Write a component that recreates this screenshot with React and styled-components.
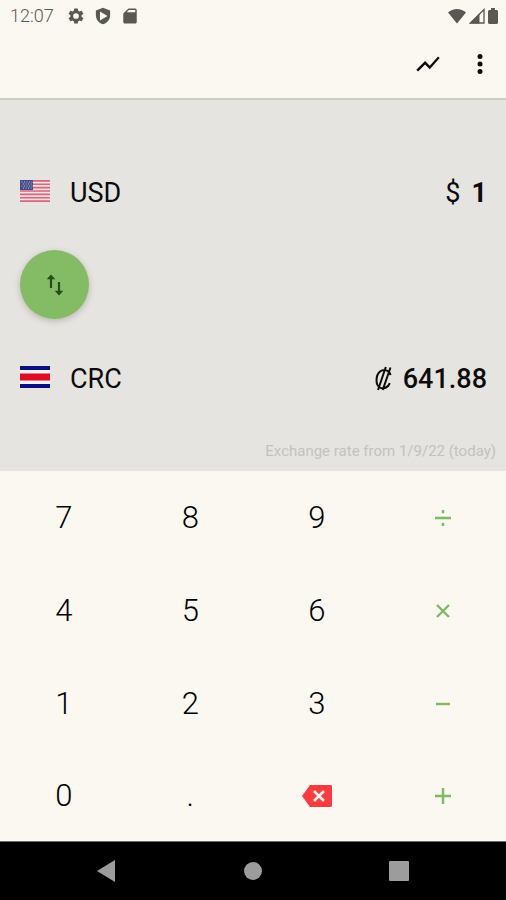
import React from "react";
import styled, { createGlobalStyle } from "styled-components";

const GlobalStyle = createGlobalStyle`
  *, *::before, *::after { box-sizing: border-box; }
  body {
    margin: 0;
    background: #fbf8f1;
    color: #0c0c0c;
    font-family: Roboto, "Liberation Sans", sans-serif;
  }
  button { font: inherit; color: inherit; border: 0; padding: 0; background: none; cursor: pointer; }
  svg { display: block; }
`;

const Screen = styled.div`
  display: flex;
  flex-direction: column;
  min-height: 100vh;
`;

const StatusBar = styled.div`
  display: flex;
  align-items: center;
  height: 32px;
  padding: 0 8px 0 10px;
  color: #595855;
`;

const Clock = styled.time`
  margin-right: 13px;
  font-size: 18px;
  line-height: 24px;
  font-weight: 300;
`;

const StatusIcons = styled.div`
  display: flex;
  align-items: center;
  gap: ${(p) => p.$gap}px;
  margin-left: ${(p) => (p.$end ? "auto" : 0)};
`;

const AppBar = styled.header`
  display: flex;
  align-items: center;
  justify-content: flex-end;
  gap: 22px;
  height: 68px;
  padding: 0 11px 2px 0;
  border-bottom: 2px solid #cdccc8;
`;

const IconButton = styled.button`
  display: grid;
  place-items: center;
  width: 30px;
  height: 48px;
`;

const Converter = styled.main`
  display: flex;
  flex: 1 1 0;
  flex-direction: column;
  background: #e6e4e0;
`;

const Currencies = styled.div`
  padding-top: 46px;
`;

const Row = styled.div`
  display: flex;
  align-items: center;
  height: 93px;
  padding: 0 19px 0 20px;
  font-size: 27px;
  line-height: 32px;
`;

const SwapRow = styled(Row)`
  padding-bottom: 2px;
`;

const CurrencyButton = styled.button`
  display: flex;
  align-items: center;
  gap: 20px;
`;

const Flag = styled.svg`
  width: 30px;
  height: 22px;
  margin-bottom: 3px;
`;

const Amount = styled.output`
  display: flex;
  gap: 11px;
  margin-left: auto;
`;

const Value = styled.span`
  font-weight: ${(p) => (p.$result ? 500 : 700)};
`;

const SwapButton = styled.button`
  display: grid;
  place-items: center;
  width: 69px;
  height: 69px;
  border-radius: 50%;
  background: #84bc66;
  color: #2a4a1d;
  box-shadow: 0 2px 6px rgba(60, 50, 40, 0.26);
`;

const RateNote = styled.p`
  margin: auto 10px 10px;
  text-align: right;
  font-size: 15px;
  line-height: 20px;
  color: #c3c2bf;
`;

const Keypad = styled.section`
  display: grid;
  flex: 1 1 0;
  grid-template-columns: repeat(4, 1fr);
  grid-template-rows: repeat(4, 1fr);
`;

const Key = styled.button`
  display: grid;
  place-items: center;
  min-height: 56px;
  padding: 3px 0 0 1px;
  font-size: 31px;
  line-height: 36px;
  font-weight: 300;
  color: ${(p) => (p.$operator ? "#7dba62" : "#000")};
`;

const NavBar = styled.nav`
  display: flex;
  justify-content: space-between;
  align-items: center;
  height: 59px;
  padding: 0 83px 0 82px;
  border-top: 1px solid #6d6c69;
  background: #000;
  color: #9c9c9c;
`;

const NavButton = styled.button`
  display: grid;
  place-items: center;
  width: 48px;
  height: 48px;
`;

function Icon({ size = 24, children, ...rest }) {
  return (
    <svg width={size} height={size} viewBox="0 0 24 24" fill="currentColor" aria-hidden="true" {...rest}>
      {children}
    </svg>
  );
}

const Gear = () => (
  <Icon size={18}>
    <path
      fillRule="evenodd"
      d="M19.43 12.98c.04-.32.07-.64.07-.98s-.03-.66-.07-.98l2.11-1.65c.19-.15.24-.42.12-.64l-2-3.46c-.12-.22-.39-.3-.61-.22l-2.49 1c-.52-.4-1.08-.73-1.69-.98l-.38-2.65A.49.49 0 0 0 14 2h-4c-.25 0-.46.18-.49.42l-.38 2.65c-.61.25-1.17.59-1.69.98l-2.49-1c-.23-.09-.49 0-.61.22l-2 3.46c-.13.22-.07.49.12.64l2.11 1.65c-.04.32-.07.65-.07.98s.03.66.07.98l-2.11 1.65c-.19.15-.24.42-.12.64l2 3.46c.12.22.39.3.61.22l2.49-1c.52.4 1.08.73 1.69.98l.38 2.65c.03.24.24.42.49.42h4c.25 0 .46-.18.49-.42l.38-2.65c.61-.25 1.17-.59 1.69-.98l2.49 1c.23.09.49 0 .61-.22l2-3.46c.12-.22.07-.49-.12-.64l-2.11-1.65zM12 15.8a3.800 3.800 0 1 1 0-7.600 3.800 3.800 0 0 1 0 7.600z"
    />
  </Icon>
);

const Shield = () => (
  <Icon size={18}>
    <path fillRule="evenodd" d="M12 1 2.500 4.500V11c0 5.600 4 10.500 9.500 12 5.500-1.500 9.500-6.400 9.500-12V4.500L12 1zM8 6v12l10-6z" />
  </Icon>
);

const SdCard = () => (
  <Icon size={18}>
    <path fillRule="evenodd" d="M18 2h-8L3 8.500V20c0 1.100.9 2 2 2h14c1.100 0 2-.9 2-2V4c0-1.100-.9-2-3-2zM10.500 4h8.500v3H7.500z" />
  </Icon>
);

const Wifi = () => (
  <svg width="18" height="16" viewBox="0 0 18 16" fill="currentColor" aria-hidden="true">
    <path d="M0 4.500C5-.3 13-.3 18 4.500L9 15.500z" />
  </svg>
);

const Signal = () => (
  <svg width="16" height="16" viewBox="0 0 16 16" aria-hidden="true">
    <path d="M15 1.500V15H1.500z" fill="none" stroke="currentColor" strokeWidth="1.300" />
    <path d="M10.500 5.500v10H.5z" fill="currentColor" />
  </svg>
);

const Battery = () => (
  <svg width="10" height="16" viewBox="0 0 10 16" fill="currentColor" aria-hidden="true">
    <path d="M3 0h4v2h2l1 1v12l-1 1H1l-1-1V3l1-1h2z" />
  </svg>
);

const UsFlag = () => (
  <Flag viewBox="0 0 30 22" aria-hidden="true">
    <rect width="30" height="22" fill="#f3dfdf" />
    <path
      d="M0 .85h30M0 4.230h30M0 7.610h30M0 11h30M0 14.380h30M0 17.760h30M0 21.150h30"
      stroke="#d4687c"
      strokeWidth="1.700"
    />
    <rect width="13" height="10" fill="#444b86" />
    <path
      d="M1.500 2h11M3 4h9M1.500 6h11M3 8h9"
      stroke="#bcc1dc"
      strokeWidth="1"
      strokeDasharray="1 1.500"
    />
  </Flag>
);

const CostaRicaFlag = () => (
  <Flag viewBox="0 0 30 22" aria-hidden="true">
    <rect width="30" height="22" fill="#f4f2f2" />
    <path d="M0 0h30v4H0zM0 18h30v4H0z" fill="#07107c" />
    <path d="M0 7.500h30v7H0z" fill="#de0b24" />
  </Flag>
);

const ColonSign = () => (
  <svg width="17" height="32" viewBox="0 0 17 32" role="img" aria-label="₡">
    <path
      d="M15.500 12.200C14.700 7.500 9.200 5.300 5 8.500.6 12.200.2 21.800 4.800 24.500c3.400 2 8.400.2 10-4.300M10.800 4 3 27M15.500 4.500 7.700 27"
      fill="none"
      stroke="currentColor"
      strokeWidth="2"
    />
  </svg>
);

const SwapArrows = () => (
  <svg width="18" height="24" viewBox="0 0 18 24" fill="currentColor" aria-hidden="true">
    <path d="M5 1.500 9.300 6.200H6.100v8.800H3.900V6.200H.7zM13 22.500 8.700 17.800h3.200V9h2.200v8.800h3.200z" />
  </svg>
);

const Backspace = () => (
  <svg width="30" height="22" viewBox="0 0 30 22" aria-hidden="true">
    <path d="M8 0h21l1 1v20l-1 1H8L0 11z" fill="#fb3b3f" />
    <path d="m12 6 10 10m0-10L12 16" stroke="#fff3ed" strokeWidth="2.600" />
  </svg>
);

const operatorPaths = {
  divide: "M1 9h16M9 1v3.200M9 13.800v3.200",
  multiply: "m3 3 12 12m0-12L3 15",
  minus: "M2 9h14",
  plus: "M1 9h16M9 1v16",
};

const Operator = ({ kind }) => (
  <svg width="18" height="18" viewBox="0 0 18 18" aria-hidden="true">
    <path d={operatorPaths[kind]} fill="none" stroke="currentColor" strokeWidth="2.400" />
  </svg>
);

const keys = [
  "7", "8", "9", "divide",
  "4", "5", "6", "multiply",
  "1", "2", "3", "minus",
  "0", ".", "backspace", "plus",
];

function KeypadKey({ name }) {
  if (operatorPaths[name]) {
    return (
      <Key type="button" $operator aria-label={name}>
        <Operator kind={name} />
      </Key>
    );
  }
  if (name === "backspace") {
    return (
      <Key type="button" aria-label={name}>
        <Backspace />
      </Key>
    );
  }
  return <Key type="button">{name}</Key>;
}

export default function App() {
  return (
    <Screen>
      <GlobalStyle />
      <StatusBar>
        <Clock>12:07</Clock>
        <StatusIcons $gap={9}>
          <Gear />
          <Shield />
          <SdCard />
        </StatusIcons>
        <StatusIcons $end $gap={3}>
          <Wifi />
          <Signal />
          <Battery />
        </StatusIcons>
      </StatusBar>
      <AppBar>
        <IconButton type="button" aria-label="Chart">
          <Icon size={28}>
            <path d="m3.500 18.490 6-6.010 4 4L22 6.920l-1.410-1.410-7.090 7.970-4-4L2 16.990z" />
          </Icon>
        </IconButton>
        <IconButton type="button" aria-label="More options">
          <Icon size={30}>
            <circle cx="12" cy="6" r="2" />
            <circle cx="12" cy="12" r="2" />
            <circle cx="12" cy="18" r="2" />
          </Icon>
        </IconButton>
      </AppBar>
      <Converter>
        <Currencies>
          <Row>
            <CurrencyButton type="button">
              <UsFlag />
              USD
            </CurrencyButton>
            <Amount>
              <span>$</span>
              <Value>1</Value>
            </Amount>
          </Row>
          <SwapRow>
            <SwapButton type="button" aria-label="Swap currencies">
              <SwapArrows />
            </SwapButton>
          </SwapRow>
          <Row>
            <CurrencyButton type="button">
              <CostaRicaFlag />
              CRC
            </CurrencyButton>
            <Amount>
              <ColonSign />
              <Value $result>641.88</Value>
            </Amount>
          </Row>
        </Currencies>
        <RateNote>Exchange rate from 1/9/22 (today)</RateNote>
      </Converter>
      <Keypad aria-label="Keypad">
        {keys.map((name) => (
          <KeypadKey key={name} name={name} />
        ))}
      </Keypad>
      <NavBar aria-label="System navigation">
        <NavButton type="button" aria-label="Back">
          <svg width="18" height="22" viewBox="0 0 18 22" fill="currentColor"><path d="M18 0v22L0 11z" /></svg>
        </NavButton>
        <NavButton type="button" aria-label="Home">
          <svg width="18" height="18" viewBox="0 0 18 18" fill="currentColor"><circle cx="9" cy="9" r="9" /></svg>
        </NavButton>
        <NavButton type="button" aria-label="Recent apps">
          <svg width="20" height="20" viewBox="0 0 20 20" fill="currentColor"><rect width="20" height="20" rx="1" /></svg>
        </NavButton>
      </NavBar>
    </Screen>
  );
}
